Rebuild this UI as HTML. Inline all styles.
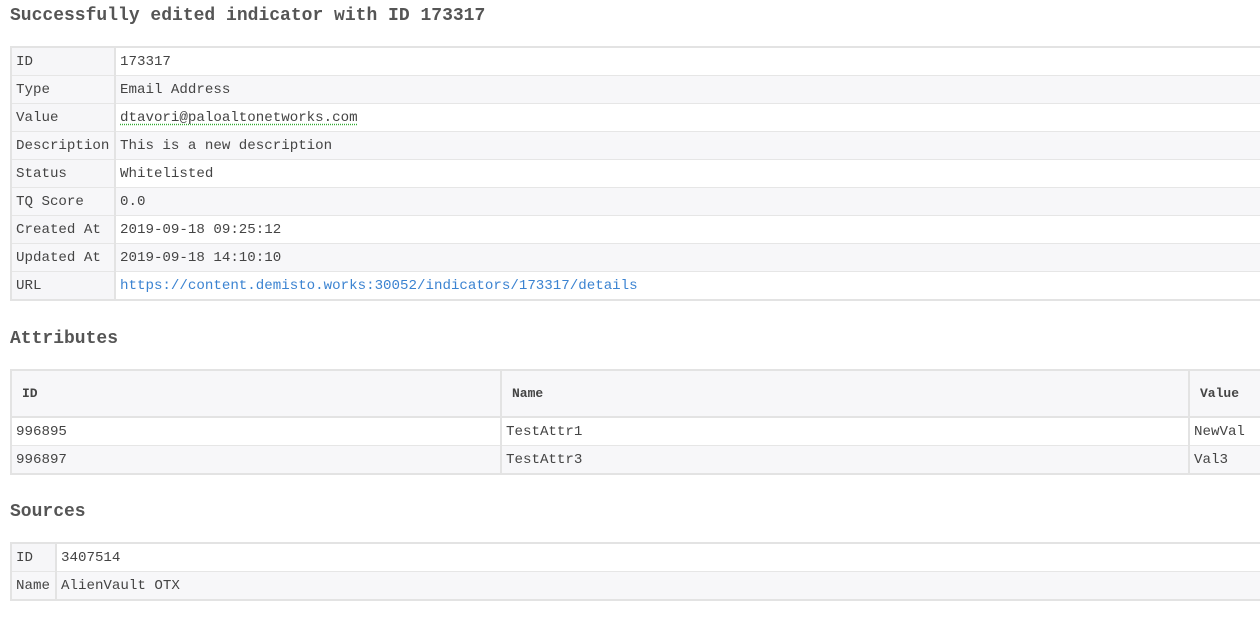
<!DOCTYPE html>
<html><head><style>
html,body{margin:0;padding:0;background:#fff;width:1260px;height:618px;overflow:hidden}
body{font-family:"Liberation Mono","Courier New",monospace;color:#444;font-size:14.15px;position:relative}
h2{position:absolute;left:10px;margin:0;font-size:18px;font-weight:bold;color:#555;line-height:20px}
table{position:absolute;left:10px;border-collapse:collapse;border:2px solid #e3e3e3;border-right:none}
td,th{border:1px solid #e6e6e6;height:26px;padding:1px 4px 0;text-align:left;white-space:nowrap;line-height:26px;box-sizing:content-box}
td.l{background:#f6f6f8;border-right:2px solid #e3e3e3}
tr.g td{background:#f7f7f9}
a{color:#3b83d1;text-decoration:none}
.u{text-decoration:underline dotted #3a3;text-underline-offset:3px}
th{font-weight:bold;font-size:13px;background:#f7f7f9;height:45px;padding:0 10px;border-bottom:2px solid #e3e3e3;border-right:2px solid #e3e3e3;color:#444}
</style></head><body>
<h2 style="top:6px">Successfully edited indicator with ID 173317</h2>
<table style="top:46px;width:1300px">
<tr><td class="l" style="width:94px">ID</td><td>173317</td></tr>
<tr class="g"><td class="l">Type</td><td>Email Address</td></tr>
<tr><td class="l">Value</td><td><span class="u">dtavori@paloaltonetworks.com</span></td></tr>
<tr class="g"><td class="l">Description</td><td>This is a new description</td></tr>
<tr><td class="l">Status</td><td>Whitelisted</td></tr>
<tr class="g"><td class="l">TQ Score</td><td>0.0</td></tr>
<tr><td class="l">Created At</td><td>2019-09-18 09:25:12</td></tr>
<tr class="g"><td class="l">Updated At</td><td>2019-09-18 14:10:10</td></tr>
<tr><td class="l">URL</td><td><a>https://content.demisto.works:30052/indicators/173317/details</a></td></tr>
</table>
<h2 style="top:329px">Attributes</h2>
<table style="top:369px;width:1320px">
<tr><th style="width:468px">ID</th><th style="width:666px">Name</th><th>Value</th></tr>
<tr><td style="border-right:2px solid #e3e3e3">996895</td><td style="border-right:2px solid #e3e3e3">TestAttr1</td><td>NewVal</td></tr>
<tr class="g"><td style="border-right:2px solid #e3e3e3">996897</td><td style="border-right:2px solid #e3e3e3">TestAttr3</td><td>Val3</td></tr>
</table>
<h2 style="top:502px">Sources</h2>
<table style="top:542px;width:1300px">
<tr><td class="l" style="width:35px">ID</td><td>3407514</td></tr>
<tr class="g"><td class="l">Name</td><td>AlienVault OTX</td></tr>
</table>
</body></html>
